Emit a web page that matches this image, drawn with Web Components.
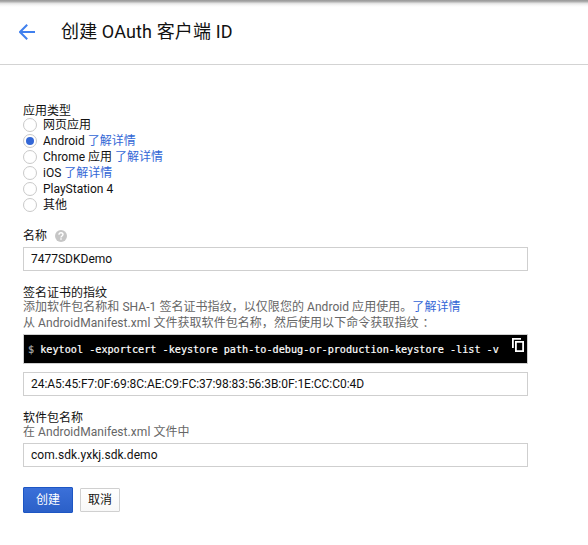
<!DOCTYPE html>
<html lang="zh-CN">
<head>
<meta charset="utf-8">
<title>创建 OAuth 客户端 ID</title>
<style>
body{margin:0;background:#fff;color:#111;font:12px/16px Roboto,"Noto Sans CJK SC",sans-serif;width:588px;height:545px;overflow:hidden}
</style>
</head>
<body>
<oauth-page></oauth-page>
<script>
const define = (name, html) => customElements.define(name, class extends HTMLElement {
  constructor() {
    super();
    const t = document.createElement('template');
    t.innerHTML = html;
    this.attachShadow({mode: 'open'}).append(t.content.cloneNode(true));
  }
});

define('page-header', `<style>
:host{display:flex;align-items:center;box-sizing:border-box;height:65px;padding:0 0 1px 19px;gap:26px;border-bottom:1px solid #d3d3d3;background:linear-gradient(#969696 0,#b4b4b4 2px,#dedede 3px,#f5f5f5 5px,#fff 7px)}
svg{display:block;width:16px;height:16px}
h1{margin:0;font-size:18px;line-height:24px;font-weight:400;color:#111;white-space:nowrap;letter-spacing:.13px}
</style><svg viewBox="0 0 16 16" fill="none" stroke="#4080ee" stroke-width="2"><path d="M16 8H2M8.2.8 1 8l7.2 7.2"/></svg><h1><slot></slot></h1>`);

define('help-link', `<style>:host{display:inline}a{color:#3367d6;text-decoration:none}</style><a><slot></slot></a>`);

define('radio-option', `<style>
:host{display:flex;align-items:center;gap:6px;height:16px;white-space:nowrap}
i{box-sizing:border-box;width:14px;height:14px;border:1px solid #c9c9c9;border-radius:50%;flex:none;display:grid;place-items:center}
:host([checked]) i::after{content:"";width:8px;height:8px;border-radius:50%;background:#3367d6}
</style><i></i><span><slot></slot></span>`);

define('help-dot', `<style>:host{display:block;width:12px;height:12px}svg{display:block}</style>
<svg width="12" height="12" viewBox="0 0 12 12"><circle cx="6" cy="6" r="6" fill="#c6c6c6"/><path d="M4 4.8C4 3.5 4.8 2.8 6 2.8s2 .7 2 1.8c0 1.3-2 1.4-2 2.8M6 8.3v1.4" fill="none" stroke="#fff" stroke-width="1.4"/></svg>`);

define('text-box', `<style>
:host{display:flex;align-items:center;box-sizing:border-box;width:505px;height:24px;border:1px solid #cfcfcf;padding-left:7px;color:#111;white-space:nowrap}
</style><span><slot></slot></span>`);

define('command-box', `<style>
:host{display:flex;box-sizing:border-box;width:505px;height:30px;border:1px solid #cfcfcf;background:#000;color:#fff;padding:0 3px 0 4px;justify-content:space-between}
code{font:10.17px/29px "DejaVu Sans Mono",monospace;white-space:pre;-webkit-text-stroke:.2px currentColor}
b{font-weight:400;color:#aaa}
svg{display:block;margin-top:3px;flex:none}
</style><code><b>$</b> <slot></slot></code><svg width="12" height="14" viewBox="0 0 12 14" fill="none" stroke="#fff" stroke-width="1.8"><path d="M9 .9H.9V10M3.9 3.9h7.2v9.2H3.9z"/></svg>`);

define('field-group', `<style>
:host{display:flex;flex-direction:column}
header{display:flex;align-items:center;gap:8px;height:14px;white-space:nowrap;color:#111}
div{color:#666;white-space:nowrap;margin-top:-1px}
</style><header><span><slot name="label"></slot></span><slot name="help"></slot></header><div><slot name="hint"></slot></div><slot></slot>`);

define('push-button', `<style>
:host{display:block}
button{box-sizing:border-box;display:block;width:40px;height:24px;padding:0;border:1px solid #d0d0d0;border-radius:1px;background:linear-gradient(#fff,#f8f8f8);color:#111;font:inherit;line-height:22px}
:host([primary]) button{width:50px;height:26px;line-height:24px;background:linear-gradient(#3b70d9,#2b60c8);border-color:#1d56c4;color:#fff}
</style><button><slot></slot></button>`);

define('oauth-page', `<style>
:host{display:block}
main{display:flex;flex-direction:column;align-items:flex-start;padding:39px 0 0 23px}
.types{margin-bottom:16px}
.name{margin-bottom:15px}
.name text-box{margin-top:5px}
.cert{margin-bottom:15px}
.cert command-box{margin:3px 0 8px}
.pkg text-box{margin-top:3px}
.pkg text-box{letter-spacing:.05px}
.actions{display:flex;align-items:center;gap:7px;margin-top:20px}
p{margin:0;letter-spacing:.05px}
.colon{margin-left:4px}
#sha{letter-spacing:-.034px}
</style>
<page-header>创建 OAuth 客户端 ID</page-header>
<main>
<field-group class="types"><span slot="label">应用类型</span>
<radio-option>网页应用</radio-option>
<radio-option checked>Android <help-link>了解详情</help-link></radio-option>
<radio-option>Chrome 应用 <help-link>了解详情</help-link></radio-option>
<radio-option>iOS <help-link>了解详情</help-link></radio-option>
<radio-option>PlayStation 4</radio-option>
<radio-option>其他</radio-option></field-group>
<field-group class="name"><span slot="label">名称</span><help-dot slot="help"></help-dot><text-box>7477SDKDemo</text-box></field-group>
<field-group class="cert"><span slot="label">签名证书的指纹</span>
<p slot="hint">添加软件包名称和 SHA-1 签名证书指纹，以仅限您的 Android 应用使用。<help-link>了解详情</help-link></p>
<p slot="hint">从 AndroidManifest.xml 文件获取软件包名称，然后使用以下命令获取指纹<span class="colon">：</span></p>
<command-box>keytool -exportcert -keystore path-to-debug-or-production-keystore -list -v</command-box>
<text-box id="sha">24:A5:45:F7:0F:69:8C:AE:C9:FC:37:98:83:56:3B:0F:1E:CC:C0:4D</text-box></field-group>
<field-group class="pkg"><span slot="label">软件包名称</span><p slot="hint">在 AndroidManifest.xml 文件中</p><text-box>com.sdk.yxkj.sdk.demo</text-box></field-group>
<div class="actions"><push-button primary>创建</push-button><push-button>取消</push-button></div>
</main>`);
</script>
</body>
</html>
